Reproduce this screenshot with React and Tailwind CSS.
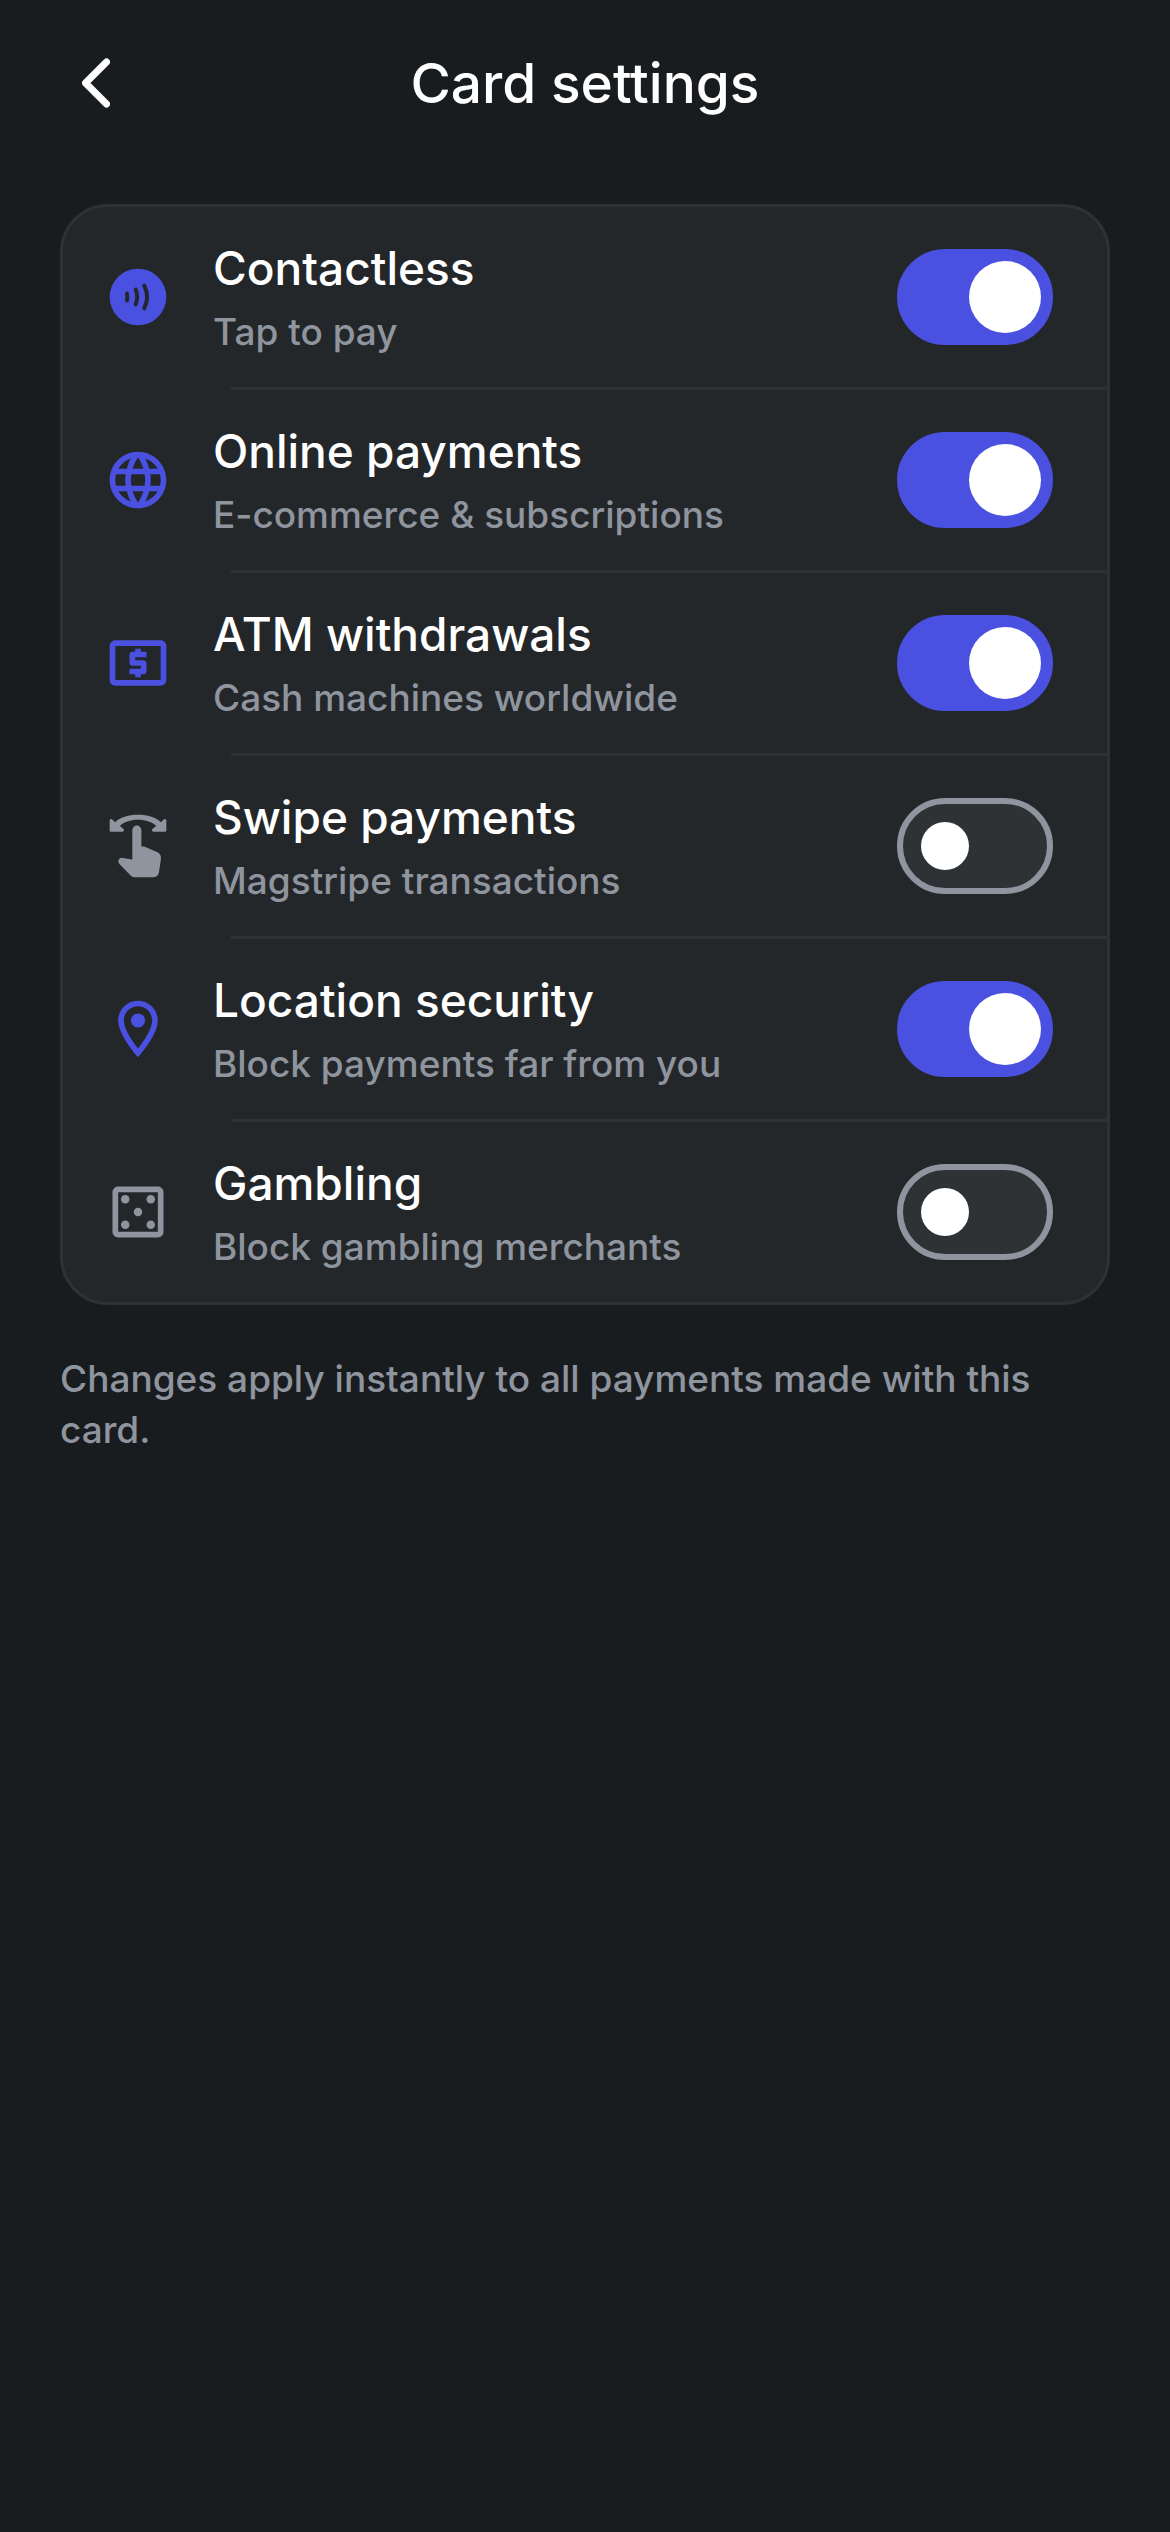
import { useState } from 'react';
import { MdLanguage, MdLocalAtm, MdOutlineCasino, MdOutlineLocationOn } from 'react-icons/md';

function ContactlessIcon({ className }) {
    return (
        <svg viewBox="0 0 24 24" className={className} fill="none" aria-hidden="true">
            <circle cx="12" cy="12" r="10" fill="currentColor" />
            <g stroke="#24272a" strokeWidth="1.4" strokeLinecap="round">
                <path d="M8.1 10.8Q8.4 12 8.1 13.2" />
                <path d="M11.2 9.4Q12.2 12 11.2 14.6" />
                <path d="M14.2 8Q16.2 12 14.2 16" />
            </g>
        </svg>
    );
}

function SwipeIcon({ className }) {
    return (
        <svg viewBox="0 0 24 24" className={className} fill="currentColor" aria-hidden="true">
            <path d="M10 6.4a1.6 1.6 0 0 1 3.2 0v5.8h.7c.3 0 .6.1.9.2l4.1 1.8c.9.5 1.3 1.3 1.2 2.3l-.7 4.8c-.1 1-.9 1.7-1.9 1.7h-6.7c-.5 0-1-.2-1.4-.6l-3.9-4c-1-1.1-.1-2.4 1.1-2.2l3.4.6z" />
            <path d="M2 3.1c0-.6.6-.8 1-.4l.9.9C5.6 1.9 8.6 1 12 1s6.4.9 8.1 2.6l.9-.9c.4-.4 1-.2 1 .4v3.4c0 .3-.2.5-.5.5h-3.8c-.7 0-1-.7-.5-1.1l1.2-1C17 3.5 14.8 2.7 12 2.7s-5 .8-6.4 2.2l1.2 1c.5.4.2 1.1-.5 1.1H2.5c-.3 0-.5-.2-.5-.5z" />
        </svg>
    );
}

const settings = [
    { id: 'contactless', label: 'Contactless', hint: 'Tap to pay', icon: ContactlessIcon, enabled: true },
    { id: 'online', label: 'Online payments', hint: 'E-commerce & subscriptions', icon: MdLanguage, enabled: true },
    { id: 'atm', label: 'ATM withdrawals', hint: 'Cash machines worldwide', icon: MdLocalAtm, enabled: true },
    { id: 'swipe', label: 'Swipe payments', hint: 'Magstripe transactions', icon: SwipeIcon, enabled: false },
    { id: 'location', label: 'Location security', hint: 'Block payments far from you', icon: MdOutlineLocationOn, enabled: true },
    { id: 'gambling', label: 'Gambling', hint: 'Block gambling merchants', icon: MdOutlineCasino, enabled: false },
];

function SettingRow({ item, checked, onChange, first }) {
    const Icon = item.icon;
    return (
        <li>
            {!first && <div className="ml-[168px] h-[3px] bg-[#2e3235]" />}
            <label htmlFor={item.id} className="flex h-[180px] cursor-pointer items-center pr-[54px] pl-[41px]">
                <Icon className={`size-[68px] shrink-0 ${checked ? 'text-[#4a50e0]' : 'text-[#8f959e]'}`} />
                <span className="ml-[41px] flex min-w-0 flex-1 flex-col gap-px pb-[3px] font-medium">
                    <span className="text-[46px] leading-[72px] text-white">{item.label}</span>
                    <span className="text-[37px] leading-[54px] text-[#8f959e]">{item.hint}</span>
                </span>
                <input
                    id={item.id}
                    type="checkbox"
                    role="switch"
                    checked={checked}
                    onChange={onChange}
                    className="flex h-24 w-[156px] shrink-0 cursor-pointer appearance-none items-center rounded-full border-[6px] border-[#8f959e] bg-[#2e3235] px-[18px] before:size-12 before:rounded-full before:bg-white before:content-[''] checked:justify-end checked:border-[#4a50e0] checked:bg-[#4a50e0] checked:px-1.5 checked:before:size-[72px]"
                />
            </label>
        </li>
    );
}

export default function App() {
    const [enabled, setEnabled] = useState(() => Object.fromEntries(settings.map((s) => [s.id, s.enabled])));

    return (
        <div className="min-h-screen bg-[#191c1f] font-['Inter',sans-serif]">
            <header className="grid h-[166px] grid-cols-[96px_1fr_96px] items-center px-12">
                <button type="button" aria-label="Back" className="flex size-24 items-center justify-center text-white">
                    <svg viewBox="0 0 28 50" className="h-[50px] w-7" fill="none" aria-hidden="true">
                        <path d="M24.5 4 3.5 25 24.5 46" stroke="currentColor" strokeWidth="7" strokeLinecap="round" strokeLinejoin="round" />
                    </svg>
                </button>
                <h1 className="text-center text-[55px] leading-[72px] font-medium text-white">Card settings</h1>
            </header>
            <main className="px-[60px] pt-[38px]">
                <ul className="overflow-hidden rounded-[48px] border-[3px] border-[#2e3235] bg-[#24272a]">
                    {settings.map((item, i) => (
                        <SettingRow
                            key={item.id}
                            item={item}
                            first={i === 0}
                            checked={enabled[item.id]}
                            onChange={(e) => setEnabled({ ...enabled, [item.id]: e.target.checked })}
                        />
                    ))}
                </ul>
                <p className="mt-12 text-[37px] leading-[51px] font-medium text-[#8f959e]">
                    Changes apply instantly to all payments made with this card.
                </p>
            </main>
        </div>
    );
}
